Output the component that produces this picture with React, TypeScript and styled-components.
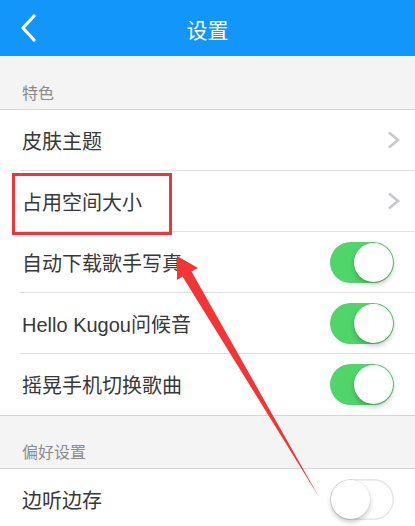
import React from "react";
import styled, { createGlobalStyle } from "styled-components";

const GlobalStyle = createGlobalStyle`
  html, body { margin: 0; padding: 0; background: #fff; }
  body { font-family: "Liberation Sans", "Noto Sans CJK SC", sans-serif; }
  * { box-sizing: border-box; }
`;

const Page = styled.div`
  position: relative;
  width: 415px;
  height: 526px;
  overflow: hidden;
  background: #fff;
  display: flex;
  flex-direction: column;
`;

const Header = styled.header`
  height: 56px;
  flex: none;
  background: #1296f9;
  display: grid;
  grid-template-columns: 60px 1fr 60px;
  align-items: center;
`;

const BackButton = styled.div`
  display: flex;
  align-items: center;
  padding-left: 19px;
  height: 100%;
`;

const Title = styled.h1`
  margin: 0;
  text-align: center;
  color: #fff;
  font-family: "Noto Sans CJK SC", sans-serif;
  font-weight: 400;
  font-size: 21px;
  line-height: 1;
  padding-top: 2px;
`;

const SectionHeader = styled.div<{ $h: number }>`
  height: ${(p) => p.$h}px;
  flex: none;
  background: #f4f4f4;
  border-bottom: 1px solid #d6d6d6;
  display: flex;
  align-items: flex-end;
  padding: 0 0 7px 22px;
  color: #8a8a8a;
  font-family: "Noto Sans CJK SC", sans-serif;
  font-size: 16px;
  line-height: 20px;
`;

const Group = styled.div<{ $last?: boolean }>`
  flex: none;
  background: #fff;
  border-bottom: ${(p) => (p.$last ? "none" : "1px solid #d6d6d6")};
`;

const Row = styled.div<{ $sep?: boolean }>`
  position: relative;
  height: 61px;
  display: flex;
  align-items: center;
  justify-content: space-between;
  margin-left: 20px;
  padding-left: 2px;
  border-bottom: ${(p) => (p.$sep ? "1px solid #e2e2e2" : "none")};
`;

const Label = styled.span`
  display: inline-block;
  padding-top: 3px;
  font-family: "Liberation Sans", "Noto Sans CJK SC", sans-serif;
  font-size: 20px;
  color: #383838;
  line-height: 1;
`;

const Chevron = styled.div`
  width: 30px;
  height: 30px;
  margin-right: 6px;
  display: flex;
  align-items: center;
  justify-content: center;
`;

const Toggle = styled.div<{ $on: boolean }>`
  position: relative;
  width: 64px;
  height: 41px;
  margin-right: 21px;
  border-radius: 21px;
  background: ${(p) => (p.$on ? "#50d56a" : "#fff")};
  box-shadow: ${(p) => (p.$on ? "none" : "inset 0 0 0 1.5px #e6e6e6")};
`;

const Knob = styled.div<{ $on: boolean }>`
  position: absolute;
  top: 1px;
  left: ${(p) => (p.$on ? "24px" : "1px")};
  width: 39px;
  height: 39px;
  border-radius: 50%;
  background: #fff;
  box-shadow: 0 3px 5px rgba(0, 0, 0, 0.22), 0 0 0 0.5px rgba(0, 0, 0, 0.06);
`;

const Highlight = styled.div`
  position: absolute;
  left: -8px;
  top: 2px;
  width: 160px;
  height: 62px;
  border: 3px solid #ef3535;
  pointer-events: none;
`;

const ArrowLayer = styled.svg`
  position: absolute;
  left: 0;
  top: 0;
  pointer-events: none;
`;

const ChevronIcon = () => (
  <svg width="14" height="20" viewBox="0 0 14 20">
    <path d="M2 2.5 L11 10 L2 17.5" fill="none" stroke="#c8c8cc" strokeWidth="2.6" />
  </svg>
);

const Switch = ({ on }: { on: boolean }) => (
  <Toggle $on={on}>
    <Knob $on={on} />
  </Toggle>
);

export default function App() {
  return (
    <>
      <GlobalStyle />
      <Page>
        <Header>
          <BackButton>
            <svg width="20" height="28" viewBox="0 0 20 28">
              <path
                d="M15 2 L4 14 L15 26"
                fill="none"
                stroke="#fff"
                strokeWidth="3.2"
                strokeLinecap="round"
                strokeLinejoin="round"
              />
            </svg>
          </BackButton>
          <Title>设置</Title>
          <div />
        </Header>

        <SectionHeader $h={54}>特色</SectionHeader>
        <Group>
          <Row $sep>
            <Label>皮肤主题</Label>
            <Chevron>
              <ChevronIcon />
            </Chevron>
          </Row>
          <Row $sep>
            <Label>占用空间大小</Label>
            <Chevron>
              <ChevronIcon />
            </Chevron>
            <Highlight />
          </Row>
          <Row $sep>
            <Label>自动下载歌手写真</Label>
            <Switch on />
          </Row>
          <Row $sep>
            <Label>Hello Kugou问候音</Label>
            <Switch on />
          </Row>
          <Row>
            <Label>摇晃手机切换歌曲</Label>
            <Switch on />
          </Row>
        </Group>

        <SectionHeader $h={53}>偏好设置</SectionHeader>
        <Group $last>
          <Row>
            <Label>边听边存</Label>
            <Switch on={false} />
          </Row>
        </Group>

        <ArrowLayer width="415" height="526" viewBox="0 0 415 526">
          <polygon
            points="177,256 198,268 191.5,271.5 319,497 182.5,276.5 177,280"
            fill="#f23636"
          />
        </ArrowLayer>
      </Page>
    </>
  );
}
